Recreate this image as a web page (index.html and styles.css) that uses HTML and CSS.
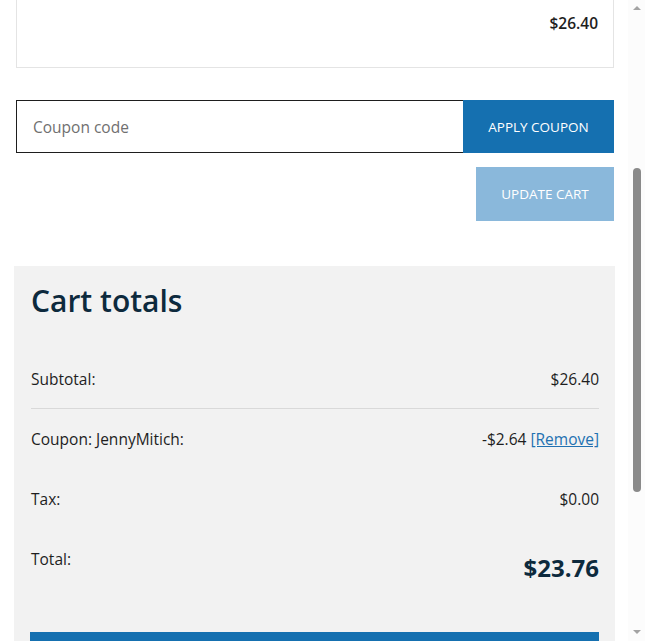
FILE: index.html
```html
<!DOCTYPE html>
<html lang="en">
<head>
<meta charset="utf-8">
<title>Cart</title>
<link rel="stylesheet" href="styles.css">
</head>
<body>
<div class="viewport">
  <main class="content">
    <div class="item-card">
      <span class="item-price">$26.40</span>
    </div>

    <form class="coupon">
      <input class="coupon-input" type="text" placeholder="Coupon code">
      <button class="btn btn-apply" type="button">APPLY COUPON</button>
    </form>

    <div class="update-row">
      <button class="btn btn-update" type="button">UPDATE CART</button>
    </div>

    <section class="totals">
      <h2 class="totals-title">Cart totals</h2>
      <div class="row row-line">
        <span class="label">Subtotal:</span>
        <span class="value">$26.40</span>
      </div>
      <div class="row">
        <span class="label">Coupon: JennyMitich:</span>
        <span class="value">-$2.64 <a class="remove" href="#">[Remove]</a></span>
      </div>
      <div class="row">
        <span class="label">Tax:</span>
        <span class="value">$0.00</span>
      </div>
      <div class="row row-total">
        <span class="label">Total:</span>
        <span class="value total-value">$23.76</span>
      </div>
      <div class="checkout-btn"></div>
    </section>
  </main>
  <div class="scrollbar">
    <div class="arrow arrow-up"></div>
    <div class="track">
      <div class="thumb"></div>
    </div>
    <div class="arrow arrow-down"></div>
  </div>
</div>
</body>
</html>
```

FILE: styles.css
```css
* { box-sizing: border-box; }
html, body { margin: 0; padding: 0; background: #fff; }
body {
  font-family: "Open Sans", "Noto Sans", "Liberation Sans", sans-serif;
  color: #1e1e1e;
}
.viewport {
  display: flex;
  width: 645px;
  height: 641px;
  overflow: hidden;
}
.content {
  flex: 1;
  padding: 0 14px 0 16px;
}
.item-card {
  margin-top: -40px;
  height: 108px;
  border: 1px solid #e4e4e4;
  display: flex;
  justify-content: flex-end;
  align-items: center;
  padding-right: 15px;
  padding-top: 18px;
}
.item-price {
  font-size: 15.5px;
  font-weight: 600;
  color: #1e1e1e;
}
.coupon {
  display: flex;
  margin-top: 32px;
  height: 53px;
}
.coupon-input {
  flex: 1;
  height: 53px;
  border: 1px solid #1e1e1e;
  border-right: none;
  padding: 0 16px;
  font-family: inherit;
  font-size: 15.5px;
  color: #1e1e1e;
  outline: none;
  background: #fff;
}
.coupon-input::placeholder { color: #707070; }
.btn {
  border: none;
  color: #fff;
  font-family: inherit;
  font-size: 13.5px;
  letter-spacing: 0;
  cursor: pointer;
}
.btn-apply {
  width: 151px;
  background: #1570b0;
}
.update-row {
  display: flex;
  justify-content: flex-end;
  margin-top: 14px;
}
.btn-update {
  width: 138px;
  height: 54px;
  background: #8ab8db;
}
.totals {
  margin: 45px -1px 0 -2px;
  background: #f2f2f2;
  padding: 14px 16px 0 17px;
  height: 400px;
}
.totals-title {
  margin: 0;
  font-size: 30px;
  font-weight: 600;
  line-height: 42px;
  color: #0d2a3d;
}
.row {
  display: flex;
  justify-content: space-between;
  align-items: center;
  height: 60px;
  font-size: 15.5px;
}
.totals-title + .row { margin-top: 27px; }
.row-line { border-bottom: 1px solid #d9d9d9; }
.remove {
  color: #2271b1;
  text-decoration: underline;
}
.row-total {
  align-items: flex-start;
  padding-top: 19px;
  height: 103px;
}
.total-value {
  font-size: 24px;
  font-weight: 700;
  color: #0d2a3d;
  margin-top: 3px;
}
.checkout-btn {
  height: 40px;
  margin-left: -1px;
  background: #1570b0;
}
.scrollbar {
  width: 17px;
  background: #fcfcfc;
  display: flex;
  flex-direction: column;
  align-items: center;
}
.arrow {
  width: 0;
  height: 0;
  border-left: 4px solid transparent;
  border-right: 4px solid transparent;
}
.arrow-up {
  margin-top: 6px;
  border-bottom: 4px solid #a3a3a3;
}
.arrow-down {
  margin-bottom: 7px;
  border-top: 4px solid #a3a3a3;
}
.track {
  flex: 1;
  width: 100%;
  display: flex;
  justify-content: center;
}
.thumb {
  margin-top: 158px;
  width: 8px;
  height: 324px;
  border-radius: 4px;
  background: #8a8a8a;
}
```
